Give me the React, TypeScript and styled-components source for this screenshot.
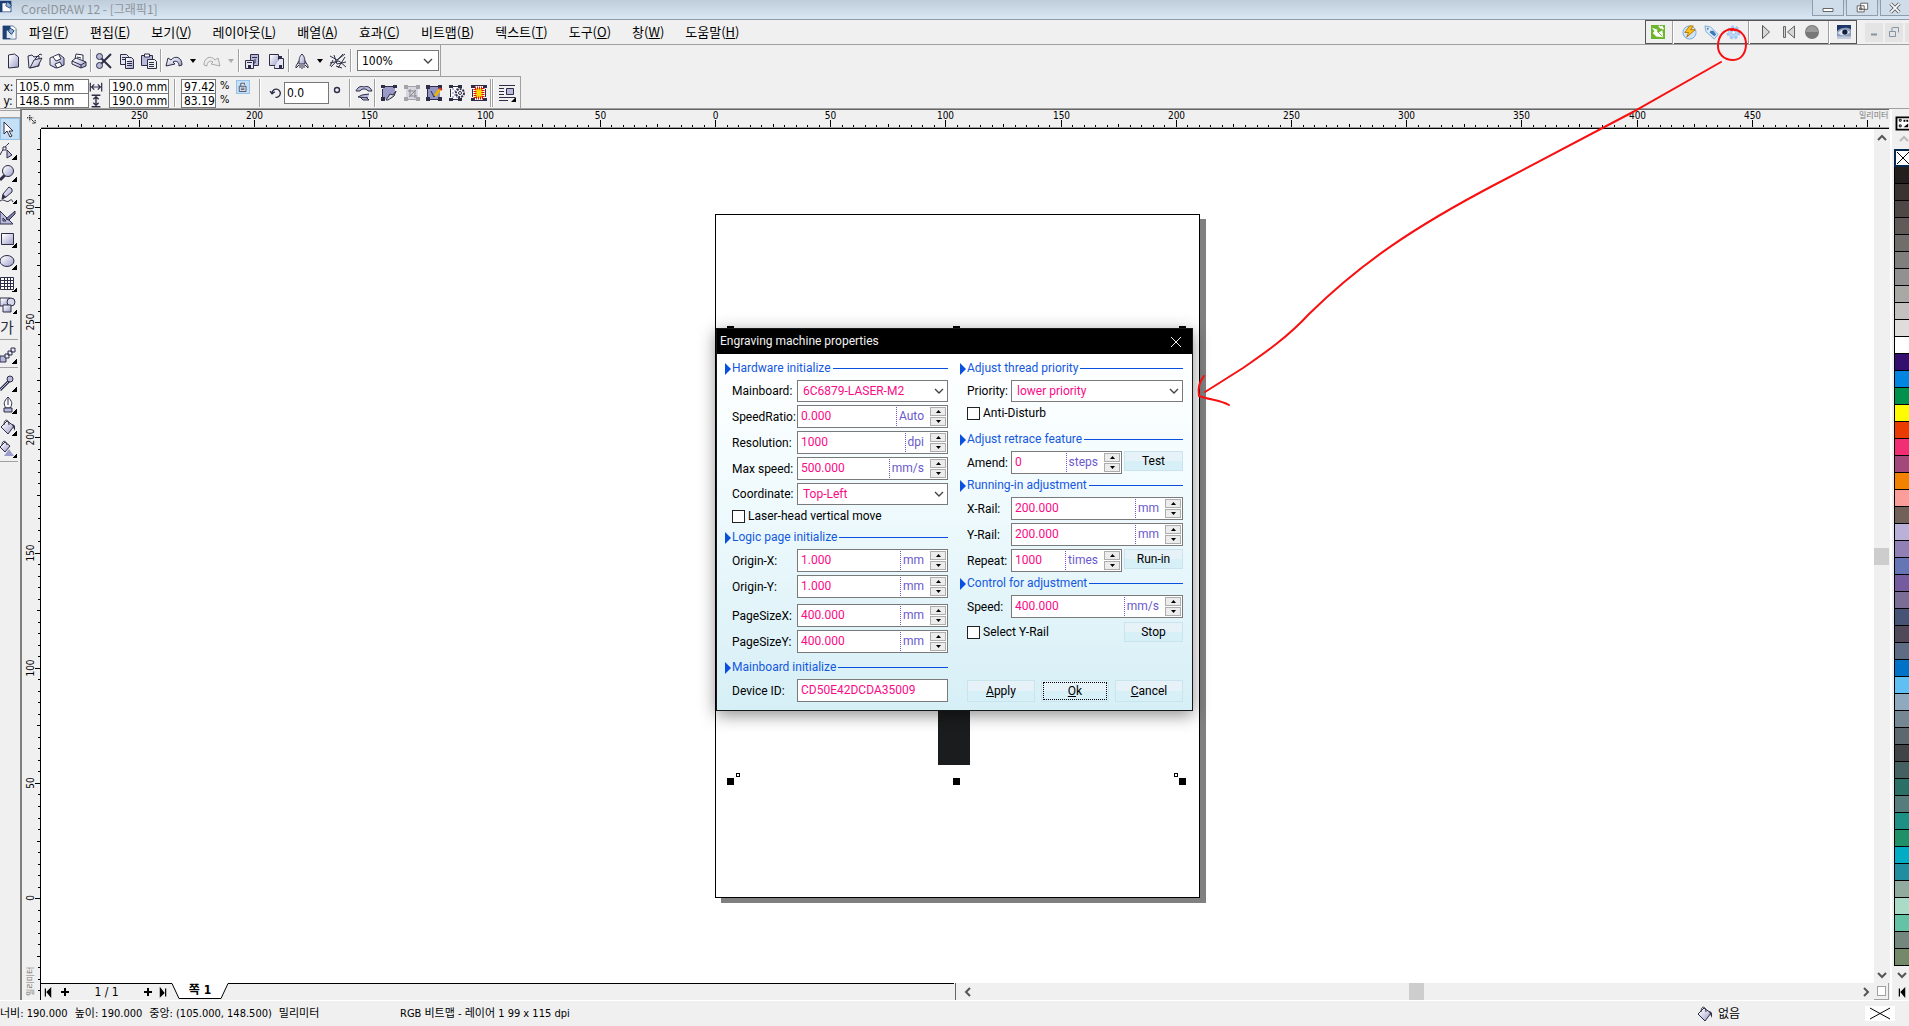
import React from "react";
import styled, { createGlobalStyle, css } from "styled-components";

const UI = `"Noto Sans CJK KR", "Noto Sans", sans-serif`;
const DIALOG = `Roboto, "Noto Sans CJK KR", sans-serif`;
const SMALL = `"DejaVu Sans Condensed", "Noto Sans CJK KR", sans-serif`;
const INK = "#2d2d48";
const LILAC = "#b9b9dc";
const FACE = "#f0f0f0";

const Global = createGlobalStyle`
  * { box-sizing: border-box; }
  html, body { margin: 0; background: ${FACE}; }
  button, input, select { font: inherit; color: inherit; margin: 0; padding: 0; border-radius: 0; }
  button { cursor: default; }
`;

const Shell = styled.div`
  position: relative;
  display: flex;
  flex-direction: column;
  min-height: 100vh;
  overflow: hidden;
  background: ${FACE};
  color: #000;
  font: 13px/18px ${UI};
`;

/* ---------- icons ---------- */

const ICONS: Record<string, React.ReactNode> = {
  app: (
    <>
      <path d="M0 1h14v14H0z" fill="#1d3f77" />
      <path d="M3 4h8l2 3v7H3z" fill="#fff" />
      <path d="M9 2l5 4-2 4-5-3z" fill="#8fb2cf" stroke="#1d3f77" />
    </>
  ),
  doc: (
    <>
      <path d="M1 1h11l3 3v11H1z" fill="#fff" stroke="#5b7594" />
      <path d="M1 1h8v14H1z" fill="#1d3f77" />
      <path d="M5 6h7v8H5z" fill="#dfe8f0" />
      <path d="M8 3l5 3-3 4-3-3z" fill="#8fb2cf" stroke="#1d3f77" />
    </>
  ),
  new: <path d="M3.500 2l6-1 4 3v10l-10 1z" fill="url(#g)" stroke={INK} />,
  open: (
    <>
      <path d="M1 3l4-1 2 2 5-1v10L2 15z" fill="#e9e9f6" stroke={INK} />
      <path d="M3 15l4-8 8-2-4 8z" fill="url(#g)" stroke={INK} />
      <path d="M8 6l5-5 2 1" fill="none" stroke={INK} />
    </>
  ),
  save: (
    <>
      <path d="M1 5l9-4 5 4v7l-8 3-6-3z" fill="url(#g)" stroke={INK} />
      <path d="M4 4l3 4 5-2-2-4M6 11l5-2 2 4-5 2z" fill="#fff" stroke={INK} />
    </>
  ),
  print: (
    <>
      <path d="M4 6l1-5 7 1v6" fill="#fff" stroke={INK} />
      <path d="M1 8l4-3 10 4v4l-5 2-9-4z" fill="url(#g)" stroke={INK} />
      <path d="M1 8l9 4 5-3M10 12v3M6 4l4 1" fill="none" stroke={INK} />
    </>
  ),
  cut: (
    <>
      <path d="M5 5l10 10M5 11L15 1" stroke={INK} strokeWidth="2" />
      <circle cx="3.500" cy="3.500" r="3" fill={LILAC} stroke={INK} />
      <circle cx="3.500" cy="12.500" r="3" fill={LILAC} stroke={INK} />
    </>
  ),
  copy: (
    <>
      <path d="M1.500 1.500h6l2 2v8h-8z" fill="#e4e4f3" stroke={INK} />
      <path d="M6.500 4.500h6l2 2v9h-8z" fill="url(#g)" stroke={INK} />
      <path d="M8 8.500h5M8 10.500h5M8 12.500h5M3 4.500h3M3 6.500h3" stroke={INK} />
    </>
  ),
  paste: (
    <>
      <path d="M.5 2.500h11v10H.5z" fill={LILAC} stroke={INK} />
      <path d="M3.500 1h5v3h-5z" fill="#fff" stroke={INK} />
      <path d="M6.500 6.500h7l2 2v7h-9z" fill="#eee" stroke={INK} />
      <path d="M8 9.500h5M8 11.500h5M8 13.500h5" stroke={INK} />
    </>
  ),
  undo: (
    <path d="M0 13l2-8 3 2c4-5 11-3 11 5l-3 1c0-4-3-6-6-4l2 2z" fill="url(#g)" stroke={INK} />
  ),
  redo: (
    <path d="M16 13l-2-8-3 2C7 2 0 4 0 12l3 1c0-4 3-6 6-4l-2 2z" fill="#ececec" stroke="#aaa" />
  ),
  import: (
    <>
      <path d="M6.500 1.500h8v11h-8z" fill={LILAC} stroke={INK} />
      <path d="M1.500 7.500h8v8h-8z" fill="#e4e4f3" stroke={INK} />
      <path d="M4 12h3v3H4zM8 4h5v1H8zM3 9h5v1H3z" fill={INK} />
      <path d="M11 6v4h-2" fill="none" stroke={INK} />
    </>
  ),
  export: (
    <>
      <path d="M1.500 1.500h9v11h-9z" fill="url(#g)" stroke={INK} />
      <path d="M11.500 5.500h4v10h-9v-2" fill="#e4e4f3" stroke={INK} />
      <path d="M11 12h3v3h-3zM10 3h4v3h-4z" fill={INK} />
    </>
  ),
  rocket: (
    <>
      <path d="M8 1c3 3 3 6 3 10H5C5 7 5 4 8 1z" fill="url(#g)" stroke={INK} />
      <path d="M5 8l-3 5v2l3-3M11 8l3 5v2l-3-3M6 12v3M10 12v3M8 12v4" fill="none" stroke={INK} />
    </>
  ),
  online: (
    <path d="M0 3l7 4 8-6M1 14L13 1M0 10l9-2 7 6M8 15l7-11M4 2l3 9 9-2M3 7l-3 6M6 13l6 2" fill="none" stroke={INK} />
  ),
  widthArrow: <path d="M1.500 3v10M14.500 3v10M3 8h10M6 5L3 8l3 3M10 5l3 3-3 3" fill="none" stroke={INK} strokeWidth="1.400" />,
  heightArrow: <path d="M3 1.500h10M3 14.500h10M8 3v10M5 6l3-3 3 3M5 10l3 3 3-3" fill="none" stroke={INK} strokeWidth="1.600" />,
  lock: (
    <>
      <path d="M3 7h9v7H3zM5 7V3h5v2" fill="#dfe9f5" stroke={INK} />
      <path d="M5 9.500h5M5 11.500h5" stroke={INK} />
    </>
  ),
  rotate: <path d="M3 9a6 6 0 1 1 5 6M0 6l3 4 4-3" fill="none" stroke={INK} strokeWidth="2" />,
  degree: <circle cx="8" cy="5" r="2.500" fill="none" stroke={INK} strokeWidth="1.400" />,
  mirror: (
    <>
      <path d="M0 6c2-5 6-5 8-4 2-1 6-1 8 4h-4c-1-2-3-2-4-2s-3 0-4 2z" fill={LILAC} stroke={INK} />
      <path d="M13 9L6 10l-4 2 10 1M4 12l3 3h6l-3-3" fill={LILAC} stroke={INK} />
    </>
  ),
  bmpEdit: (
    <>
      <path d="M2 2h12v8l-4 4H2z" fill="#9a9ac6" />
      <path d="M0 0h4v3H0zM12 0h4v3h-4zM0 12h4v4H0zM4 1h8v1H4zM1 4h1v8H1z" fill={INK} />
      <path d="M15 6l-2 5-6 4H5l4-6 3 1z" fill="#ddd" stroke={INK} />
    </>
  ),
  bmpCrop: (
    <>
      <path d="M2 2h12v12H2z" fill="#d6d6e2" />
      <path d="M0 0h4v4H0zM12 0h4v4h-4zM0 12h4v4H0zM12 12h4v4h-4zM4 1h8v1H4zM4 14h8v1H4z" fill="#a4a4a8" />
      <path d="M6 4v7h7M4 6h7v7M5 12l7-7" fill="none" stroke="#888" />
    </>
  ),
  bmpTrace: (
    <>
      <path d="M2 2h12v12H2z" fill="#9494c4" />
      <path d="M0 0h4v4H0zM12 0h4v4h-4zM0 12h4v4H0zM12 12h4v4h-4zM4 1h8v1H4zM4 14h8v1H4zM1 4h1v8H1z" fill={INK} />
      <path d="M5 6l3 6 2-3" fill="none" stroke={INK} />
      <path d="M14 4l-5 7" stroke="#e9b400" strokeWidth="3" />
      <path d="M13 3l3 2" stroke="#d33" strokeWidth="2" />
    </>
  ),
  bmpColor: (
    <>
      <path d="M2 2h9v12H2z" fill="#fff" />
      <path d="M3 3h2v2H3zM7 3h2v2H7zM5 5h2v2H5zM3 7h2v2H3zM5 9h2v2H5zM3 11h2v2H3zM7 11h2v2H7z" fill={LILAC} />
      <path d="M0 0h4v3H0zM9 0h4v3H9zM0 13h4v3H0zM9 13h4v3H9zM4 14h5v1H4zM1 4h1v8H1zM4 1h5v1H4z" fill={INK} />
      <circle cx="11" cy="8" r="4" fill="#fff" stroke={INK} strokeWidth="2" strokeDasharray="2 1" />
      <circle cx="11" cy="8" r="1.500" fill="none" stroke={INK} />
    </>
  ),
  bmpMask: (
    <>
      <path d="M2 1h12v14H2z" fill="#fff" />
      <path d="M4 3h8v10H4z" fill="#ffd800" stroke="#e01010" strokeWidth="3" strokeDasharray="1 1" />
      <path d="M0 0h4v3H0zM12 0h4v3h-4zM0 13h4v3H0zM12 13h4v3h-4zM1 4h1v8H1zM14 4h1v8h-1zM4 0h8v1H4zM4 15h8v1H4z" fill={INK} />
    </>
  ),
  wrap: (
    <>
      <path d="M0 .5h16M0 3.500h5M0 6.500h5M0 9.500h5M0 12.500h16M0 15.500h9" stroke={INK} />
      <path d="M7.500 3.500h7v6h-7z" fill={LILAC} stroke={INK} />
      <path d="M17 12v5h-5z" />
    </>
  ),
  green: (
    <>
      <path d="M0 0h16v16H0z" fill="#6cb52d" />
      <path d="M1 3l6 2 1 4 5-3 1 8-8-1-4-4 2-2z" fill="#fff" />
      <path d="M9 1l3 3M12 1l2 4" stroke="#fff" strokeWidth="2" />
      <path d="M7 7l6 6" stroke="#6cb52d" />
    </>
  ),
  flash: (
    <>
      <circle cx="8" cy="8" r="7" fill="#cfe4f7" stroke="#7ba7d6" />
      <path d="M8 1L3 8h4l-2 5 9-8H9l3-4z" fill="#ffc21a" stroke="#b87400" />
    </>
  ),
  tag: (
    <>
      <path d="M1 1l6 1 8 8-4 5-9-8z" fill="#dcebfa" stroke="#7fa8d4" />
      <path d="M7 6l3 0 3 4-2 2-5-4z" fill="#3c78b8" />
      <circle cx="4" cy="4" r="1" fill="#4a7ab5" />
    </>
  ),
  gear: (
    <>
      <circle cx="8" cy="8" r="6" fill="#bcd8f7" stroke="#a3c8f3" strokeWidth="3" strokeDasharray="3 2" />
      <circle cx="8" cy="8" r="2" fill="#fff" stroke="#8fb9ec" />
    </>
  ),
  play: <path d="M4.500 1.500v13l7-6.500z" fill="#d6d6d6" stroke="#555" />,
  prev: <path d="M2.500 2.500h2v11h-2zM13.500 2v12L6.500 8z" fill="#d6d6d6" stroke="#666" />,
  record: (
    <>
      <circle cx="8" cy="8" r="7" fill="#777" />
      <path d="M2 8a6 6 0 0 1 12 0z" fill="#9b9b9b" />
    </>
  ),
  eye: (
    <>
      <path d="M0 0h16v16H0z" fill="#8c9dba" />
      <path d="M0 0h16v5C10 2 5 3 0 7z" fill="#1c3766" />
      <path d="M1 9c4-5 9-5 14-1-4 5-10 5-14 1z" fill="#dbe3ee" />
      <circle cx="9" cy="8" r="3" fill="#14213c" />
      <path d="M0 13h16v3H0z" fill="#c3cddc" />
    </>
  ),
  pointer: <path d="M4 1v12l3-3 3 6 2-1-3-5h4z" fill="#fff" stroke={INK} />,
  shape: (
    <>
      <path d="M0 12C2 7 6 3 9 0" fill="none" stroke={INK} />
      <path d="M3 4h3v3H3z" fill="#fff" stroke={INK} />
      <path d="M7 7v8l5-3z" fill={LILAC} stroke={INK} />
    </>
  ),
  zoom: (
    <>
      <path d="M5 10l-5 5" stroke={INK} strokeWidth="3" />
      <circle cx="8" cy="6" r="5.500" fill="url(#g)" stroke={INK} />
    </>
  ),
  pencil: (
    <>
      <path d="M12 2L9 0 3 7l-1 5 4-2 6-5z" fill="url(#g)" stroke={INK} />
      <path d="M2 12l1-5 3 3z" fill={INK} />
      <path d="M0 14c4-3 6 2 9 0s2-2 4 1" fill="none" stroke={INK} />
    </>
  ),
  smart: (
    <>
      <path d="M0 2v13h13zM3 9v3h3z" fill={LILAC} stroke={INK} />
      <path d="M15 2l-9 8 3 1 6-6z" fill="#8080b0" stroke={INK} />
    </>
  ),
  rect: <path d="M1.500 2.500h12v11h-12z" fill="url(#g)" stroke={INK} />,
  ellipse: <ellipse cx="7" cy="8" rx="7" ry="5.500" fill="url(#g)" stroke={INK} />,
  grid: (
    <path d="M.5 2.500h13v12H.5zM.5 5.500h13M.5 8.500h13M.5 11.500h13M4.500 2v12M7.500 2v12M10.500 2v12" fill="#fff" stroke={INK} />
  ),
  shapes: (
    <>
      <path d="M0 1h10v8H0z" fill="url(#g)" stroke={INK} />
      <circle cx="11" cy="5" r="4" fill="#d7d7ee" stroke={INK} />
      <path d="M3 8h8v7H3z" fill="url(#g)" stroke={INK} />
    </>
  ),
  blend: (
    <>
      <path d="M0 9h6v6H0z" fill={LILAC} stroke={INK} />
      <path d="M5 7h4v4H5zM8 4h4v4H8zM11 1h4v4h-4z" fill="#e7e7f5" stroke={INK} />
    </>
  ),
  dropper: (
    <>
      <path d="M9 6l-9 9" stroke={INK} strokeWidth="3" />
      <path d="M8 7l-8 8" stroke={LILAC} />
      <circle cx="10" cy="4" r="3" fill={LILAC} stroke={INK} />
    </>
  ),
  nib: (
    <>
      <path d="M8 0c4 4 5 7 2 11H6C3 7 4 4 8 0z" fill="#fff" stroke={INK} />
      <path d="M8 1v7M4 11h8v4H4z" fill={LILAC} stroke={INK} />
    </>
  ),
  bucket: (
    <>
      <path d="M1 8l6-6 7 5-6 8z" fill="url(#g)" stroke={INK} />
      <path d="M4 6c0-7 5-6 5 0" fill="none" stroke={INK} />
      <path d="M12 5c4 1 3 4 3 7l-2-4z" fill={INK} />
    </>
  ),
  mesh: (
    <>
      <path d="M0 6l5-5 5 4-5 6z" fill="url(#g)" stroke={INK} />
      <path d="M2 4c0-5 4-5 5 0" fill="none" stroke={INK} />
      <path d="M9 8l5 7H4z" fill="#9c9ccc" />
    </>
  ),
  corner: (
    <path d="M0 4.500h10M4.500 0v10M6 6l7 7M13 8v5H8" fill="none" stroke="#000" strokeWidth="1.500" strokeDasharray="2 1" />
  ),
  palette: (
    <>
      <path d="M.5 1.500h15v13H.5z" fill="#fff" stroke="#000" strokeWidth="2" />
      <path d="M3.500 3.500h2v2h-2zM3.500 9.500h2v2h-2z" fill="none" stroke="#000" />
      <path d="M8 5h2M11 5h2" stroke="#000" strokeWidth="2" />
      <path d="M8 12h5V8z" />
    </>
  ),
  minimize: <path d="M3 8.500h10v3H3z" fill="#fff" stroke="#666" />,
  restore: <path d="M6.500 2.500h8v7h-8zM2.500 5.500h8v7h-8zM5 8h3v2H5z" fill="#fff" stroke="#555" />,
  close: (
    <>
      <path d="M3 3l10 10M13 3L3 13" stroke="#555" strokeWidth="4" />
      <path d="M3 3l10 10M13 3L3 13" stroke="#fff" strokeWidth="2" />
    </>
  ),
  mdiMin: <path d="M5 10.500h6" stroke="#8494a5" strokeWidth="2" />,
  mdiRestore: <path d="M6.500 3.500h6v5M3.500 7.500h6v5h-6zM6 3.500v4" fill="none" stroke="#8494a5" />,
  x: <path d="M3 3l10 10M13 3L3 13" stroke="#eee" />,
  up: <path d="M4 10l4-4 4 4" fill="none" stroke="#555" strokeWidth="2" />,
  upFaint: <path d="M4 10l4-4 4 4" fill="none" stroke="#bbb" strokeWidth="2" />,
  down: <path d="M4 6l4 4 4-4" fill="none" stroke="#555" strokeWidth="2" />,
  left: <path d="M10 4L6 8l4 4" fill="none" stroke="#555" strokeWidth="2" />,
  right: <path d="M6 4l4 4-4 4" fill="none" stroke="#555" strokeWidth="2" />,
  chevron: <path d="M4 6l4 4 4-4" fill="none" stroke="#444" strokeWidth="1.400" />,
  first: <path d="M5 4v9M11 4v9L7 8z" stroke="#000" strokeWidth="1.400" />,
  last: <path d="M11 4v9M5 4v9l4-4z" stroke="#000" strokeWidth="1.400" />,
  plus: <path d="M4 8h8M8 4v8" stroke="#000" strokeWidth="2" />,
  caret: <path d="M5 6h6l-3 4z" />,
  caretFaint: <path d="M5 6h6l-3 4z" fill="#aaa" />,
};

const Glyph = styled.svg`
  display: block;
  flex: none;
  overflow: visible;
`;
const Icon = ({ name, size = 16 }: { name: string; size?: number }) => (
  <Glyph width={size} height={size} viewBox="0 0 16 16" fill="#000" aria-hidden>
    {ICONS[name]}
  </Glyph>
);

/* ---------- frame bars ---------- */

const TitleBar = styled.header`
  display: flex;
  align-items: flex-start;
  height: 20px;
  border-bottom: 1px solid #8f99a5;
  background: linear-gradient(#bfcddb, #d9e6f3);
  color: #8d949c;
`;
const TitleText = styled.h1`
  flex: 1;
  margin: 0 0 0 8px;
  font: 12px/18px ${UI};
`;
const WinButton = styled.button`
  display: flex;
  justify-content: center;
  align-items: center;
  width: 32px;
  height: 16px;
  margin-right: 2px;
  border: 1px solid #8f9cab;
  border-top: 0;
  background: #cfdce9;
  &:last-child { width: 29px; margin-right: 0; border-right: 0; }
`;
const MenuBar = styled.nav`
  display: flex;
  align-items: center;
  height: 25px;
  padding-left: 2px;
  border-bottom: 1px solid #a0a0a0;
`;
const MenuItems = styled.div`
  display: flex;
  flex: 1;
  gap: 21px;
  margin-left: 12px;
`;
const MenuButton = styled.button`
  border: 0;
  background: none;
  white-space: nowrap;
`;
const LaserBar = styled.div`
  display: flex;
  align-items: center;
  justify-content: space-between;
  width: 212px;
  height: 24px;
  padding: 0 5px;
  border: 1px solid #555;
`;
const MdiButtons = styled.div`
  display: flex;
  gap: 2px;
  width: 52px;
  padding-left: 8px;
  overflow: hidden;
`;
const MdiButton = styled.button`
  flex: none;
  display: grid;
  place-items: center;
  width: 18px;
  height: 19px;
  border: 0;
  background: #e4e4e4;
`;
const ToolButton = styled.button<{ $w?: number }>`
  display: flex;
  align-items: center;
  justify-content: center;
  flex: none;
  width: ${(p) => p.$w ?? 22}px;
  height: 22px;
  border: 0;
  background: none;
`;
const LockButton = styled.button`
  display: grid;
  place-items: center;
  align-self: flex-start;
  width: 14px;
  height: 14px;
  margin-top: 3px;
  border: 1px solid #93c3e8;
  background: #c5dff4;
`;
const Divider = styled.span<{ $tall?: boolean }>`
  flex: none;
  width: 2px;
  height: ${(p) => (p.$tall ? 28 : 23)}px;
  border-left: 1px solid #a0a0a0;
  background: #fff;
`;
const StandardBar = styled.div`
  display: flex;
  align-items: center;
  align-self: flex-start;
  height: 31px;
  padding-left: 2px;
  border-right: 1px solid #a0a0a0;
`;
const ZoomBox = styled.label`
  display: grid;
  grid-template-columns: 1fr 16px;
  align-items: center;
  width: 82px;
  height: 21px;
  margin: 0 1px 0 5px;
  padding-right: 2px;
  border: 1px solid #777;
  background: #fff;
  font: 12px/14px ${SMALL};
`;
const bareSelect = css`
  grid-area: 1 / 1 / 2 / 3;
  width: 100%;
  height: 100%;
  border: 0;
  outline: 0;
  background: none;
  appearance: none;
`;
const ZoomSelect = styled.select`
  ${bareSelect}
  padding-left: 4px;
`;
const SelectArrow = styled.span`
  grid-area: 1 / 2;
  pointer-events: none;
`;
const PropertyBar = styled.div`
  display: flex;
  align-items: center;
  align-self: flex-start;
  height: 32px;
  border-top: 1px solid #a0a0a0;
  border-right: 1px solid #a0a0a0;
  font: 12px/14px ${SMALL};
`;
const Pair = styled.div<{ $w: number }>`
  display: grid;
  grid-template-rows: 14px 14px;
  width: ${(p) => p.$w}px;
  padding-top: 1px;
`;
const PairLine = styled.label<{ $lead: number }>`
  display: grid;
  grid-template-columns: ${(p) => p.$lead}px 1fr;
  align-items: center;
`;
const TinyInput = styled.input<{ $h?: number }>`
  width: 100%;
  height: ${(p) => p.$h ?? 15}px;
  padding-left: 2px;
  border: 1px solid #777;
  outline: 0;
  background: #fff;
`;
const Percents = styled.div`
  display: grid;
  width: 20px;
  padding-left: 4px;
  font-size: 11px;
`;
const RotateBox = styled.label`
  display: grid;
  grid-template-columns: 14px 45px 17px;
  align-items: center;
`;

/* ---------- workspace ---------- */

const Workspace = styled.main`
  display: grid;
  grid-template-columns: 20px 1fr 20px;
  flex: 1;
  border-top: 1px solid #a0a0a0;
`;
const ToolBox = styled.aside`
  display: flex;
  flex-direction: column;
  width: 20px;
  overflow: hidden;
`;
const Grip = styled.div`
  height: 8px;
  margin-top: 1px;
  border-top: 1px solid #a0a0a0;
  border-bottom: 1px solid #a0a0a0;
`;
const Tool = styled.button<{ $on?: boolean }>`
  position: relative;
  flex: none;
  display: flex;
  align-items: center;
  width: 20px;
  height: 22px;
  border: 0;
  background: ${(p) => (p.$on ? "#c5dff4" : "none")};
  box-shadow: ${(p) => (p.$on ? "inset 0 0 0 1px #93c3e8" : "none")};
`;
const Flyout = styled.i`
  position: absolute;
  right: 3px;
  bottom: 2px;
  width: 5px;
  height: 5px;
  background: linear-gradient(135deg, transparent 50%, #000 50%);
`;
const TextToolFace = styled.span`
  font: 15px/20px ${UI};
  color: ${INK};
`;
const ToolRule = styled.hr`
  width: 18px;
  height: 1px;
  margin: 1px 0 4px;
  border: 0;
  background: #a0a0a0;
`;
const View = styled.section`
  display: grid;
  grid-template-columns: 19px minmax(0, 1fr) 15px;
  grid-template-rows: 19px minmax(0, 1fr) 17px;
  border-top: 1px solid #666;
  border-left: 2px solid #808080;
`;
const Corner = styled.div`
  display: grid;
  place-items: center;
`;
const TopRuler = styled.div`
  grid-column: 2 / 4;
  height: 19px;
  padding-right: 15px;
  overflow: hidden;
  border-bottom: 1px solid #000;
  background: ${FACE};
`;
const SideRuler = styled.div`
  grid-column: 1;
  grid-row: 2 / 4;
  display: flex;
  padding-bottom: 17px;
  overflow: hidden;
  border-right: 1px solid #000;
`;
const RulerSvg = styled.svg`
  display: block;
  width: 100%;
  height: 100%;
  overflow: visible;
  font: 10px ${SMALL};
`;
const Canvas = styled.div`
  display: flex;
  align-items: center;
  justify-content: center;
  overflow: hidden;
  background: #fff;
`;
const Paper = styled.div`
  position: relative;
  flex: none;
  width: 485px;
  height: 684px;
  border: 1px solid #000;
  background: #fff;
  box-shadow: 6px 5px 0 #808080;
`;
const Mark = styled.i<{ $x: number; $y: number; $open?: boolean }>`
  position: absolute;
  left: ${(p) => p.$x}px;
  top: ${(p) => p.$y}px;
  width: ${(p) => (p.$open ? 4 : 7)}px;
  height: ${(p) => (p.$open ? 4 : 7)}px;
  border: 1px solid #000;
  background: ${(p) => (p.$open ? "#fff" : "#000")};
`;
const Bitmap = styled.div`
  position: absolute;
  left: 222px;
  top: 300px;
  width: 32px;
  height: 250px;
  background: #1b1c1d;
`;
const VScroll = styled.div`
  display: flex;
  flex-direction: column;
  justify-content: space-between;
  align-items: center;
  background: ${FACE};
`;
const HScroll = styled.div`
  display: flex;
  flex: 1;
  align-items: center;
  justify-content: space-between;
  margin-left: 1px;
  padding: 0 1px 0 4px;
  border-left: 1px solid #666;
`;
const ScrollButton = styled.button`
  display: grid;
  place-items: center;
  width: 15px;
  height: 17px;
  border: 0;
  background: none;
`;
const Thumb = styled.div`
  width: 15px;
  height: 17px;
  background: #cdcdcd;
`;
const BottomBar = styled.div`
  display: flex;
`;
const Pages = styled.div`
  display: flex;
  flex: 1;
`;
const PageNav = styled.div`
  display: flex;
  align-items: center;
  width: 131px;
  border-top: 1px solid #000;
  font: 12px/16px ${SMALL};
`;
const NavButton = styled.button`
  width: 16px;
  border: 0;
  background: none;
`;
const PageCount = styled.span`
  flex: 1;
  text-align: center;
`;
const PageTab = styled.button`
  display: grid;
  width: 56px;
  height: 17px;
  border: 0;
  background: none;
  font: bold 12px/15px ${SMALL};
  & > * { grid-area: 1 / 1; }
`;
const TabFill = styled.div`
  flex: 1;
  border-top: 1px solid #000;
`;
const SizeBox = styled.div`
  display: grid;
  place-items: center;
  border: 1px solid #a0a0a0;
  border-width: 0 1px 1px 0;
`;
const SizeMark = styled.i`
  width: 9px;
  height: 10px;
  border: 1px solid #a0a0a0;
  background: #fff;
`;
const PaletteBar = styled.aside`
  display: flex;
  flex-direction: column;
  align-items: flex-start;
  margin-left: 1px;
  padding-left: 2px;
  overflow: hidden;
  border-left: 2px solid #fff;
`;
const PaletteHead = styled.div`
  height: 40px;
  padding: 7px 0 0 2px;
`;
const NoFill = styled.button`
  flex: none;
  width: 18px;
  height: 18px;
  border: 2px solid #06294d;
  background: #fff;
`;
const Swatches = styled.div`
  display: grid;
  grid-auto-rows: 17px;
  width: 18px;
  border-left: 1px solid #000;
`;
const Swatch = styled.button<{ $c: string }>`
  border: 0;
  border-bottom: 1px solid #000;
  background: ${(p) => p.$c};
`;

const StatusBar = styled.footer`
  display: flex;
  align-items: center;
  height: 26px;
  padding-right: 14px;
  overflow: hidden;
  border-top: 1px solid #fff;
  font: 11px/16px ${SMALL};
`;
const SizeInfo = styled.span`
  display: flex;
  flex: none;
  gap: 7px;
  width: 400px;
  white-space: nowrap;
`;
const ObjectInfo = styled.span`
  flex: 1;
`;
const FillInfo = styled.span`
  display: flex;
  gap: 5px;
  width: 168px;
  font-size: 12px;
`;

/* ---------- dialog ---------- */

const DialogLayer = styled.div`
  position: absolute;
  inset: 0;
  display: flex;
  align-items: center;
  justify-content: center;
  padding-top: 13px;
`;
const Dialog = styled.section`
  width: 477px;
  border: 1px solid #15181a;
  background: #000;
  box-shadow: 0 4px 16px rgba(0, 0, 0, 0.45);
  font: 12px/19px ${DIALOG};
`;
const DialogTitle = styled.header`
  display: flex;
  align-items: center;
  justify-content: space-between;
  height: 25px;
  padding: 0 8px 0 3px;
  color: #f2f2f2;
`;
const DialogName = styled.h2`
  margin: 0;
  font: inherit;
`;
const BareButton = styled.button`
  border: 0;
  background: none;
`;
const DialogBody = styled.form`
  display: grid;
  grid-template-columns: 223px 223px;
  column-gap: 12px;
  padding: 6px 8px 8px;
  background: linear-gradient(#fff, #f4fcfe 30%, #d6eff6);
`;
const Column = styled.div`
  display: flex;
  flex-direction: column;
  gap: 3px;
`;
const Heading = styled.h3<{ $space?: number }>`
  display: flex;
  align-items: center;
  gap: 2px;
  height: 17px;
  margin: ${(p) => p.$space ?? 0}px 0 0;
  color: #1458df;
  font: inherit;
  line-height: 19px;
  white-space: nowrap;
  &::before {
    content: "";
    border: solid transparent;
    border-width: 6px 0 6px 6px;
    border-left-color: #0a50e0;
    margin-right: -1px;
  }
  &::after {
    content: "";
    flex: 1;
    height: 1px;
    background: #0a50e0;
  }
`;
const Row = styled.div<{ $space?: number; $h?: number }>`
  display: flex;
  align-items: center;
  height: ${(p) => p.$h ?? 23}px;
  margin-top: ${(p) => p.$space ?? 0}px;
  padding-left: 7px;
`;
const Caption = styled.label<{ $w: number }>`
  flex: none;
  width: ${(p) => p.$w}px;
  padding-top: 1px;
  white-space: nowrap;
`;
const Box = styled.div<{ $w?: number }>`
  display: flex;
  align-items: stretch;
  flex: ${(p) => (p.$w ? "none" : 1)};
  width: ${(p) => (p.$w ? p.$w + "px" : "auto")};
  min-width: 0;
  height: 100%;
  padding: 1px;
  border: 1px solid #7a7a7a;
  background: #fff;
`;
const PinkInput = styled.input`
  flex: 1;
  min-width: 0;
  padding: 0 0 0 2px;
  border: 0;
  outline: 0;
  background: none;
  color: #fb0a86;
`;
const Unit = styled.span`
  padding: 0 6px 0 2px;
  border-left: 1px dotted #6a5acd;
  color: #6a5acd;
`;
const Spinner = styled.span`
  display: grid;
  gap: 1px;
  width: 16px;
`;
const SpinButton = styled.button`
  display: grid;
  place-items: center;
  border: 1px solid #adadad;
  background: #ececec;
`;
const ChoiceBox = styled.div`
  display: grid;
  grid-template-columns: 1fr 16px;
  align-items: center;
  flex: 1;
  height: 100%;
  border: 1px solid #7a7a7a;
  background: #fff;
`;
const Choice = styled.select`
  ${bareSelect}
  padding: 0 0 0 5px;
  color: #fb0a86;
`;
const Check = styled.label`
  display: flex;
  align-items: center;
  flex: 1;
  gap: 3px;
`;
const Tick = styled.input`
  appearance: none;
  width: 13px;
  height: 13px;
  border: 1px solid #222;
  background: #fff;
`;
const Push = styled.button<{ $small?: boolean; $focus?: boolean }>`
  width: ${(p) => (p.$small ? 59 : 68)}px;
  height: ${(p) => (p.$small ? 20 : 22)}px;
  margin-left: ${(p) => (p.$small ? 2 : 0)}px;
  align-self: flex-start;
  border: 1px solid #c9e4ec;
  background: linear-gradient(#e6f2f7 50%, #d7eff7 50%);
  line-height: 18px;
  ${(p) => p.$focus && css`outline: 1px dotted #000; outline-offset: -3px;`}
`;
const Actions = styled.div`
  display: flex;
  justify-content: space-between;
  margin-top: auto;
  padding-left: 7px;
`;
const Annotation = styled.svg`
  position: absolute;
  inset: 0;
  width: 100%;
  height: 100%;
  pointer-events: none;
`;
const Defs = styled.svg`
  position: absolute;
  width: 0;
  height: 0;
`;

/* ---------- data ---------- */

const MENUS = [
  ["파일", "F"], ["편집", "E"], ["보기", "V"], ["레이아웃", "L"], ["배열", "A"], ["효과", "C"],
  ["비트맵", "B"], ["텍스트", "T"], ["도구", "O"], ["창", "W"], ["도움말", "H"],
];
const TOOLS: [string, boolean][] = [
  ["pointer", false], ["shape", true], ["zoom", true], ["pencil", true], ["smart", false],
  ["rect", true], ["ellipse", true], ["grid", true], ["shapes", true], ["text", false],
  ["|", false], ["blend", true], ["|", false], ["dropper", true], ["nib", true], ["bucket", true],
  ["mesh", true], ["|", false],
];
const COLORS = (
  "231f1c 393431 4d4845 605b59 6f6e6b 7f7f7d 919191 a8a8a5 c2c1bf dedddb ffffff 340f70 0086e0 00924c " +
  "fffb00 ea3c00 f12e73 a3487a f38200 fb9d98 716158 bab1d8 9080b6 6575b6 755c9e 7b6e94 485475 4f495a " +
  "5f6d84 0073c8 60bff3 8fa9bf 758793 5d686e 414446 456060 2a7066 567c7b 1f9084 1f9068 00adc4 218da0 " +
  "91ac9e aadbc6 65c3a5 73877e 74886a"
).split(" ");

/* The paper is 210 x 297 mm and sits in the middle of the canvas. */
const SCALE = 2.304;
const STEPS = Array.from({ length: 241 }, (_, i) => (i - 80) * 5);
const tickLength = (mm: number) => (mm % 50 === 0 ? 7 : mm % 25 === 0 ? 3 : 2);

const HorizontalRuler = () => (
  <RulerSvg>
    <path d="M-20 17.500H4000" stroke="#a0a0a0" />
    <svg x="50%" overflow="visible">
      {STEPS.map((mm) => {
        const x = Math.round((mm - 105) * SCALE);
        return (
          <g key={mm}>
            <path d={`M${x} 17v-${tickLength(mm)}`} stroke="#000" />
            {mm % 50 === 0 && mm < 500 && mm > -300 && (
              <text x={x} y="9" textAnchor="middle">{Math.abs(mm)}</text>
            )}
          </g>
        );
      })}
    </svg>
    <svg x="100%" overflow="visible">
      <text x="-15" y="8" fill="#777" fontSize="8">밀리미터</text>
    </svg>
  </RulerSvg>
);
const VerticalRuler = () => (
  <RulerSvg>
    <svg y="50%" overflow="visible">
      {STEPS.map((mm) => {
        const y = Math.round((148.5 - mm) * SCALE);
        return (
          <g key={mm}>
            <path d={`M18 ${y + 0.5}h-${tickLength(mm) > 6 ? 5 : tickLength(mm)}`} stroke="#000" />
            {mm % 50 === 0 && mm >= 0 && mm < 350 && (
              <text transform={`translate(12 ${y}) rotate(-90)`} textAnchor="middle">{mm}</text>
            )}
          </g>
        );
      })}
    </svg>
    <svg y="100%" overflow="visible">
      <text transform="translate(11 13) rotate(-90)" fill="#777" fontSize="8">밀리미터</text>
    </svg>
  </RulerSvg>
);

/* ---------- dialog parts ---------- */

type FieldProps = { id: string; label: string; value: string; unit?: string; cap: number; w?: number; space?: number; children?: React.ReactNode };
const Field = ({ id, label, value, unit, cap, w, space, children }: FieldProps) => (
  <Row $space={space}>
    <Caption $w={cap} htmlFor={id}>{label}</Caption>
    <Box $w={w}>
      <PinkInput id={id} defaultValue={value} />
      {unit && <Unit>{unit}</Unit>}
      {unit && (
        <Spinner>
          <SpinButton type="button" aria-label={`${label} up`}>
            <Glyph width="5" height="3"><path d="M0 3h5L2.500 0z" /></Glyph>
          </SpinButton>
          <SpinButton type="button" aria-label={`${label} down`}>
            <Glyph width="5" height="3"><path d="M0 0h5L2.500 3z" /></Glyph>
          </SpinButton>
        </Spinner>
      )}
    </Box>
    {children}
  </Row>
);
const Pick = ({ id, label, value, cap }: FieldProps) => (
  <Row $h={22}>
    <Caption $w={cap} htmlFor={id}>{label}</Caption>
    <ChoiceBox>
      <Choice id={id} defaultValue={value}><option>{value}</option></Choice>
      <SelectArrow><Icon name="chevron" /></SelectArrow>
    </ChoiceBox>
  </Row>
);

const PropertiesDialog = () => (
  <DialogLayer>
    <Dialog role="dialog" aria-labelledby="dlg">
      <DialogTitle>
        <DialogName id="dlg">Engraving machine properties</DialogName>
        <BareButton aria-label="Close"><Icon name="x" /></BareButton>
      </DialogTitle>
      <DialogBody onSubmit={(e) => e.preventDefault()}>
        <Column>
          <Heading>Hardware initialize</Heading>
          <Pick id="mb" label="Mainboard:" value="6C6879-LASER-M2" cap={65} />
          <Field id="sr" label="SpeedRatio:" value="0.000" unit="Auto" cap={65} />
          <Field id="rs" label="Resolution:" value="1000" unit="dpi" cap={65} />
          <Field id="ms" label="Max speed:" value="500.000" unit="mm/s" cap={65} />
          <Pick id="co" label="Coordinate:" value="Top-Left" cap={65} />
          <Row $h={17}><Check><Tick type="checkbox" />Laser-head vertical move</Check></Row>
          <Heading $space={1}>Logic page initialize</Heading>
          <Field id="ox" label="Origin-X:" value="1.000" unit="mm" cap={65} />
          <Field id="oy" label="Origin-Y:" value="1.000" unit="mm" cap={65} />
          <Field id="px" label="PageSizeX:" value="400.000" unit="mm" cap={65} space={3} />
          <Field id="py" label="PageSizeY:" value="400.000" unit="mm" cap={65} />
          <Heading $space={3}>Mainboard initialize</Heading>
          <Field id="di" label="Device ID:" value="CD50E42DCDA35009" cap={65} />
        </Column>
        <Column>
          <Heading>Adjust thread priority</Heading>
          <Pick id="pr" label="Priority:" value="lower priority" cap={44} />
          <Row $h={17}><Check><Tick type="checkbox" />Anti-Disturb</Check></Row>
          <Heading $space={6}>Adjust retrace feature</Heading>
          <Field id="am" label="Amend:" value="0" unit="steps" cap={44} w={111}>
            <Push type="button" $small>Test</Push>
          </Field>
          <Heading>Running-in adjustment</Heading>
          <Field id="xr" label="X-Rail:" value="200.000" unit="mm" cap={44} />
          <Field id="yr" label="Y-Rail:" value="200.000" unit="mm" cap={44} />
          <Field id="rp" label="Repeat:" value="1000" unit="times" cap={44} w={111}>
            <Push type="button" $small>Run-in</Push>
          </Field>
          <Heading>Control for adjustment</Heading>
          <Field id="sp" label="Speed:" value="400.000" unit="mm/s" cap={44} />
          <Row $h={20} $space={1}>
            <Check><Tick type="checkbox" />Select Y-Rail</Check>
            <Push type="button" $small>Stop</Push>
          </Row>
          <Actions>
            <Push type="button"><u>A</u>pply</Push>
            <Push type="submit" $focus><u>O</u>k</Push>
            <Push type="button"><u>C</u>ancel</Push>
          </Actions>
        </Column>
      </DialogBody>
    </Dialog>
  </DialogLayer>
);

const Btn = ({ n, w }: { n: string; w?: number }) => (
  <ToolButton $w={w} aria-label={n}><Icon name={n} /></ToolButton>
);

export default function App() {
  return (
    <Shell>
      <Global />
      <Defs>
        <linearGradient id="g" x1="0" y1="0" x2="1" y2="1">
          <stop offset="0.1" stopColor="#fff" />
          <stop offset="1" stopColor="#9a9ac8" />
        </linearGradient>
      </Defs>
      <TitleBar>
        <Icon name="app" size={13} />
        <TitleText>CorelDRAW 12 - [그래픽1]</TitleText>
        <WinButton aria-label="Minimize"><Icon name="minimize" /></WinButton>
        <WinButton aria-label="Restore"><Icon name="restore" size={14} /></WinButton>
        <WinButton aria-label="Close window"><Icon name="close" size={14} /></WinButton>
      </TitleBar>
      <MenuBar>
        <Icon name="doc" size={15} />
        <MenuItems>
          {MENUS.map(([name, key]) => (
            <MenuButton key={name}>{name}(<u>{key}</u>)</MenuButton>
          ))}
        </MenuItems>
        <LaserBar>
          <Icon name="green" size={14} /><Divider />
          <Icon name="flash" size={15} /><Icon name="tag" size={15} /><Icon name="gear" size={15} /><Divider />
          <Icon name="play" /><Icon name="prev" /><Icon name="record" /><Divider />
          <Icon name="eye" size={14} />
        </LaserBar>
        <MdiButtons>
          <MdiButton aria-label="Minimize document"><Icon name="mdiMin" /></MdiButton>
          <MdiButton aria-label="Restore document"><Icon name="mdiRestore" /></MdiButton>
          <MdiButton aria-label="Close document" />
        </MdiButtons>
      </MenuBar>
      <StandardBar>
        <Btn n="new" /><Btn n="open" /><Btn n="save" /><Btn n="print" /><Divider />
        <Btn n="cut" w={24} /><Btn n="copy" /><Btn n="paste" /><Divider />
        <Btn n="undo" w={24} /><Btn n="caret" w={14} /><Btn n="redo" w={24} /><Btn n="caretFaint" w={14} /><Divider />
        <Btn n="import" w={24} /><Btn n="export" w={24} /><Divider />
        <Btn n="rocket" w={24} /><Btn n="caret" w={12} /><Btn n="online" w={24} /><Divider />
        <ZoomBox>
          <ZoomSelect aria-label="Zoom" defaultValue="100%"><option>100%</option></ZoomSelect>
          <SelectArrow><Icon name="chevron" /></SelectArrow>
        </ZoomBox>
      </StandardBar>
      <PropertyBar>
        <Pair $w={89}>
          <PairLine $lead={16}><span>&nbsp;x:</span><TinyInput defaultValue="105.0 mm" /></PairLine>
          <PairLine $lead={16}><span>&nbsp;y:</span><TinyInput defaultValue="148.5 mm" /></PairLine>
        </Pair>
        <Pair $w={80}>
          <PairLine $lead={20}><Icon name="widthArrow" size={14} /><TinyInput aria-label="Width" defaultValue="190.0 mm" /></PairLine>
          <PairLine $lead={20}><Icon name="heightArrow" size={14} /><TinyInput aria-label="Height" defaultValue="190.0 mm" /></PairLine>
        </Pair>
        <ToolButton as="span" $w={12}><Divider $tall /></ToolButton>
        <Pair $w={35}>
          <PairLine $lead={0}><span /><TinyInput aria-label="Scale X" defaultValue="97.421" /></PairLine>
          <PairLine $lead={0}><span /><TinyInput aria-label="Scale Y" defaultValue="83.199" /></PairLine>
        </Pair>
        <Percents><span>%</span><span>%</span></Percents>
        <LockButton aria-label="Lock ratio"><Icon name="lock" size={12} /></LockButton>
        <ToolButton as="span" $w={20}><Divider $tall /></ToolButton>
        <RotateBox>
          <Icon name="rotate" size={11} />
          <TinyInput aria-label="Rotation" $h={22} defaultValue="0.0" />
          <Icon name="degree" />
        </RotateBox>
        <ToolButton as="span" $w={8}><Divider $tall /></ToolButton>
        <Btn n="mirror" w={20} /><Divider $tall />
        <Btn n="bmpEdit" w={26} /><Btn n="bmpCrop" w={20} /><Btn n="bmpTrace" w={24} />
        <Btn n="bmpColor" w={22} /><Btn n="bmpMask" w={22} />
        <Divider $tall /><Divider $tall />
        <Btn n="wrap" w={26} />
      </PropertyBar>
      <Workspace>
        <ToolBox>
          <Grip />
          {TOOLS.map(([name, flyout], i) =>
            name === "|" ? (
              <ToolRule key={i} />
            ) : (
              <Tool key={name} $on={name === "pointer"} aria-label={name}>
                {name === "text" ? <TextToolFace>가</TextToolFace> : <Icon name={name} />}
                {flyout && <Flyout />}
              </Tool>
            )
          )}
        </ToolBox>
        <View>
          <Corner><Icon name="corner" size={10} /></Corner>
          <TopRuler><HorizontalRuler /></TopRuler>
          <SideRuler><VerticalRuler /></SideRuler>
          <Canvas>
            <Paper>
              <Bitmap />
              {[111, 337, 563].map((y) =>
                [11, 237, 463].map((x) => <Mark key={`${x}-${y}`} $x={x} $y={y} />)
              )}
              <Mark $open $x={20} $y={558} />
              <Mark $open $x={458} $y={558} />
            </Paper>
          </Canvas>
          <VScroll>
            <ScrollButton aria-label="Scroll up"><Icon name="up" /></ScrollButton>
            <Thumb />
            <ScrollButton aria-label="Scroll down"><Icon name="down" /></ScrollButton>
          </VScroll>
          <BottomBar>
            <Pages>
              <PageNav>
                <NavButton aria-label="First page"><Icon name="first" size={14} /></NavButton>
                <NavButton aria-label="Add page before"><Icon name="plus" /></NavButton>
                <PageCount>1 / 1</PageCount>
                <NavButton aria-label="Add page after"><Icon name="plus" /></NavButton>
                <NavButton aria-label="Last page"><Icon name="last" size={14} /></NavButton>
              </PageNav>
              <PageTab>
                <Glyph width="56" height="17">
                  <path d="M0 0L7 15H49L56 0z" fill="#fff" />
                  <path d="M0 .5L7 15.500H49L56 .5" fill="none" stroke="#000" />
                </Glyph>
                <span>쪽 1</span>
              </PageTab>
              <TabFill />
            </Pages>
            <HScroll>
              <ScrollButton aria-label="Scroll left"><Icon name="left" /></ScrollButton>
              <Thumb />
              <ScrollButton aria-label="Scroll right"><Icon name="right" /></ScrollButton>
            </HScroll>
          </BottomBar>
          <SizeBox><SizeMark /></SizeBox>
        </View>
        <PaletteBar>
          <PaletteHead>
            <Icon name="palette" size={15} />
            <Icon name="upFaint" />
          </PaletteHead>
          <NoFill aria-label="No fill">
            <Glyph width="14" height="14"><path d="M1 1l12 12M13 1L1 13" stroke="#000" /></Glyph>
          </NoFill>
          <Swatches>
            {COLORS.map((c, i) => <Swatch key={i} $c={"#" + c} aria-label={"#" + c} />)}
          </Swatches>
          <ScrollButton aria-label="Next colors"><Icon name="down" /></ScrollButton>
          <ScrollButton aria-label="Expand palette"><Icon name="first" size={14} /></ScrollButton>
        </PaletteBar>
      </Workspace>
      <StatusBar>
        <SizeInfo>
          <span>너비: 190.000</span>
          <span>높이: 190.000</span>
          <span>중앙: (105.000, 148.500)</span>
          <span>밀리미터</span>
        </SizeInfo>
        <ObjectInfo>RGB 비트맵 - 레이어 1 99 x 115 dpi</ObjectInfo>
        <FillInfo><Icon name="bucket" />없음</FillInfo>
        <Glyph width="30" height="15">
          <path d="M0 0h30v15H0z" fill="#fff" />
          <path d="M5 2l20 11M25 2L5 13" stroke="#000" />
        </Glyph>
      </StatusBar>
      <PropertiesDialog />
      <Annotation fill="none" stroke="#f81010" strokeWidth="2" strokeLinecap="round">
        <path d="M1733 29c-10 0-15 8-15 17 0 8 6 14 15 14 9 0 13-8 13-16 0-9-7-16-15-14" />
        <path d="M1721 62L1631 113L1498 183C1412 228 1360 264 1309 314C1285 340 1260 356 1243 368L1205 392" />
        <path d="M1204 376C1199 382 1198 390 1199 396C1210 400 1220 400 1229 405" />
      </Annotation>
    </Shell>
  );
}
